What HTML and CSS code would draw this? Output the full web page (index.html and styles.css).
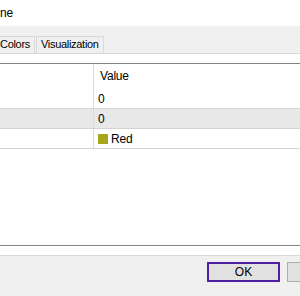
FILE: index.html
```html
<!DOCTYPE html>
<html lang="en">
<head>
  <meta charset="UTF-8">
  <title>Properties</title>
  <link rel="stylesheet" href="styles.css">
</head>
<body>
  <div class="titlebar">ne</div>

  <div class="tabstrip">
    <div class="tab tab-first">Colors</div>
    <div class="tab">Visualization</div>
  </div>

  <div class="panel">
    <div class="grid">
      <div class="row head">
        <div class="cell name"></div>
        <div class="cell value">Value</div>
      </div>
      <div class="row">
        <div class="cell name"></div>
        <div class="cell value">0</div>
      </div>
      <div class="row selected">
        <div class="cell name"></div>
        <div class="cell value">0</div>
      </div>
      <div class="row">
        <div class="cell name"></div>
        <div class="cell value"><span class="swatch"></span>Red</div>
      </div>
      <div class="filler"></div>
    </div>
  </div>

  <div class="buttons">
    <button class="btn default">OK</button>
    <button class="btn"></button>
  </div>
</body>
</html>
```

FILE: styles.css
```css
html, body {
  margin: 0;
  height: 100%;
}
body {
  width: 300px;
  height: 296px;
  overflow: hidden;
  display: flex;
  flex-direction: column;
  background: #f0f0f0;
  font-family: "Liberation Sans", Arial, sans-serif;
  font-size: 11px;
  letter-spacing: -0.2px;
  color: #000;
}
.titlebar {
  background: #fff;
  height: 26px;
  line-height: 26px;
  font-size: 12px;
  flex: none;
}
.tabstrip {
  height: 27px;
  display: flex;
  align-items: flex-end;
  flex: none;
}
.tab {
  height: 16px;
  line-height: 15px;
  padding: 0 4px;
  border: 1px solid #d9d9d9;
  border-bottom: none;
  background: #f0f0f0;
  margin-right: 1px;
  letter-spacing: -0.3px;
}
.tab-first {
  margin-left: -5px;
}
.panel {
  flex: 1;
  background: #fff;
  border-top: 1px solid #d9d9d9;
  border-bottom: 1px solid #d9d9d9;
  padding: 9px 0;
  display: flex;
}
.grid {
  flex: 1;
  display: flex;
  flex-direction: column;
  border-top: 1px solid #828282;
  border-bottom: 1px solid #828282;
}
.row {
  display: flex;
  height: 20px;
  border-bottom: 1px solid #d4d4d4;
  box-sizing: border-box;
}
.row.head {
  height: 25px;
  border-bottom: none;
}
.row.selected {
  background: #e8e8e8;
}
.cell {
  line-height: 20px;
}
.head .cell {
  line-height: 25px;
}
.name {
  width: 93px;
  border-right: 1px solid #dcdcdc;
  flex: none;
}
.value {
  padding-left: 4px;
  display: flex;
  align-items: center;
  font-size: 12px;
}
.head .value {
  padding-left: 6px;
}
.swatch {
  width: 10px;
  height: 10px;
  background: #a6a619;
  margin-right: 3px;
}
.filler {
  flex: 1;
}
.buttons {
  height: 34px;
  flex: none;
  display: flex;
  align-items: flex-start;
  padding-top: 6px;
  padding-left: 207px;
  gap: 7px;
}
.btn {
  flex: none;
  width: 73px;
  height: 20px;
  font: inherit;
  font-size: 12px;
  background: #e1e1e1;
  border: 1px solid #adadad;
  padding: 0;
}
.btn.default {
  border: 2px solid #4f1fa3;
}
```
